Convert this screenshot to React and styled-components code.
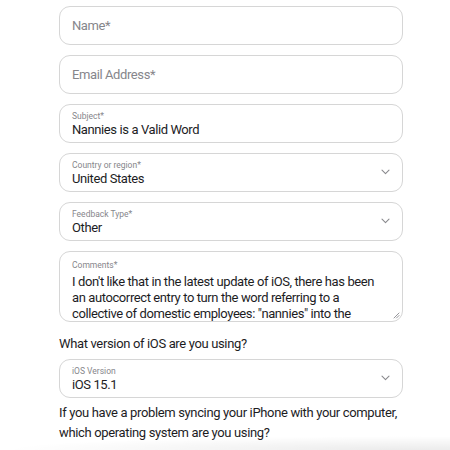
import React from 'react';
import styled, { createGlobalStyle } from 'styled-components';

const GlobalStyle = createGlobalStyle`
  html, body {
    margin: 0;
    padding: 0;
    background: #fff;
  }
  body {
    font-family: Roboto, 'Liberation Sans', sans-serif;
    color: #1d1d1f;
  }
`;

const Page = styled.div`
  position: relative;
  width: 450px;
  height: 450px;
  overflow: hidden;
  background: #fff;
`;

const Form = styled.form`
  display: flex;
  flex-direction: column;
  gap: 10px;
  width: 344px;
  padding: 6px 0 0 59px;
`;

const Field = styled.div`
  position: relative;
  box-sizing: border-box;
  height: ${(p) => (p.tall ? '71px' : '39px')};
  border: 1px solid #d6d6d6;
  border-radius: 11px;
  background: #fff;
  padding: ${(p) => (p.empty ? '0 12px' : p.tall ? '8px 12px 0' : '6px 12px 0')};
  display: flex;
  flex-direction: column;
  justify-content: ${(p) => (p.empty ? 'center' : 'flex-start')};
  overflow: hidden;
`;

const Placeholder = styled.span`
  font-size: 13px;
  letter-spacing: -0.4px;
  color: #86868b;
`;

const Label = styled.span`
  font-size: 8.5px;
  line-height: 11px;
  color: #86868b;
`;

const Value = styled.span`
  font-size: 13px;
  line-height: 15px;
  letter-spacing: -0.4px;
  color: #1d1d1f;
`;

const Comment = styled.div`
  margin-top: 3px;
  font-size: 13px;
  line-height: 16px;
  letter-spacing: -0.4px;
  color: #1d1d1f;
`;

const Chevron = styled.svg`
  position: absolute;
  right: 12px;
  top: 15px;
  width: 9px;
  height: 6px;
`;

const Grip = styled.svg`
  position: absolute;
  right: 2px;
  bottom: 2px;
  width: 7px;
  height: 7px;
`;

const Question = styled.p`
  margin: ${(p) => (p.first ? '2px 0 -5px' : '-5px 0 0')};
  font-size: 13px;
  line-height: 20px;
  letter-spacing: -0.35px;
  color: #1d1d1f;
`;

const Shade = styled.div`
  position: absolute;
  left: 0;
  right: 0;
  bottom: 0;
  height: 14px;
  background: radial-gradient(ellipse at 90% 100%, rgba(0, 0, 0, 0.08), rgba(0, 0, 0, 0) 70%);
  pointer-events: none;
`;

const Select = ({ label, value }) => (
  <Field>
    <Label>{label}</Label>
    <Value>{value}</Value>
    <Chevron viewBox="0 0 9 6">
      <path d="M1 1.2 L4.5 4.6 L8 1.2" fill="none" stroke="#8a8a8e" strokeWidth="1.1" strokeLinecap="round" strokeLinejoin="round" />
    </Chevron>
  </Field>
);

export default function App() {
  return (
    <Page>
      <GlobalStyle />
      <Form>
        <Field empty>
          <Placeholder>Name*</Placeholder>
        </Field>
        <Field empty>
          <Placeholder>Email Address*</Placeholder>
        </Field>
        <Field>
          <Label>Subject*</Label>
          <Value>Nannies is a Valid Word</Value>
        </Field>
        <Select label="Country or region*" value="United States" />
        <Select label="Feedback Type*" value="Other" />
        <Field tall>
          <Label>Comments*</Label>
          <Comment>
            I don't like that in the latest update of iOS, there has been an autocorrect entry to turn the word referring to a collective of domestic employees: "nannies" into the
          </Comment>
          <Grip viewBox="0 0 7 7">
            <path d="M6 1 L1 6 M6 3.5 L3.5 6" stroke="#8a8a8e" strokeWidth="0.9" strokeLinecap="round" />
          </Grip>
        </Field>
        <Question first>What version of iOS are you using?</Question>
        <Select label="iOS Version" value="iOS 15.1" />
        <Question>
          If you have a problem syncing your iPhone with your computer, which operating system are you using?
        </Question>
      </Form>
      <Shade />
    </Page>
  );
}
